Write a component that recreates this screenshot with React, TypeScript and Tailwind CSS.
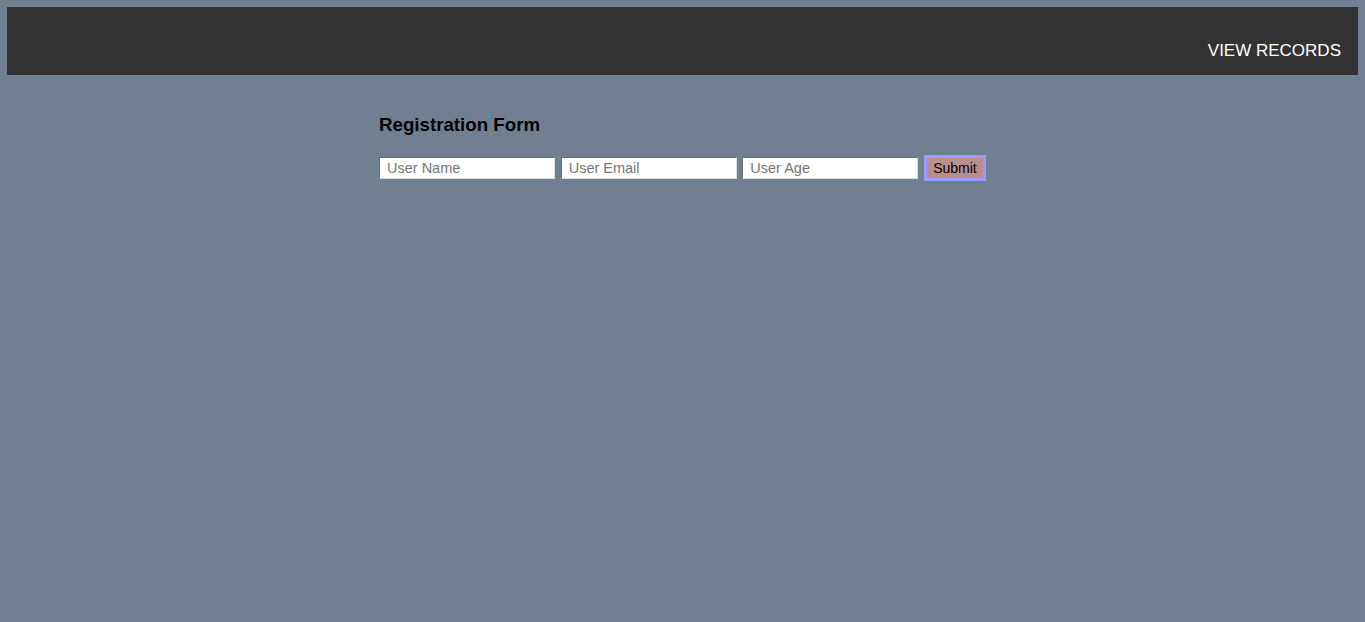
const App = () => {
  return (
    <div className="min-h-[622px] bg-[#708090] pt-[7px] font-['Liberation_Sans',Arial,sans-serif]">
      <header className="mx-[7px] flex h-[68px] items-end justify-end bg-[#333333] pl-4 pr-[17px] pb-[14px]">
        <a href="#" className="text-[17px] leading-5 text-white">
          VIEW RECORDS
        </a>
      </header>

      <div className="mx-auto mt-[38px] w-[607px]">
        <h2 className="text-[18.72px] font-bold leading-[23px] text-black">Registration Form</h2>
        <form className="mt-[19px] flex items-center gap-[5.67px]" onSubmit={(e) => e.preventDefault()}>
          <input
            type="text"
            placeholder="User Name"
            className="h-[22px] w-[176px] border border-t-[#6b6b6b] border-l-[#6b6b6b] border-r-[#dcdcdc] border-b-[#dcdcdc] bg-white px-[7px] text-[14.5px] text-black placeholder:text-[#757575] outline-none"
          />
          <input
            type="email"
            placeholder="User Email"
            className="h-[22px] w-[176px] border border-t-[#6b6b6b] border-l-[#6b6b6b] border-r-[#dcdcdc] border-b-[#dcdcdc] bg-white px-[7px] text-[14.5px] text-black placeholder:text-[#757575] outline-none"
          />
          <input
            type="number"
            placeholder="User Age"
            className="h-[22px] w-[176px] border border-t-[#6b6b6b] border-l-[#6b6b6b] border-r-[#dcdcdc] border-b-[#dcdcdc] bg-white px-[7px] text-[14.5px] text-black placeholder:text-[#757575] outline-none"
          />
          <button
            type="submit"
            className="h-[26px] w-[62px] border-[3px] border-[#9b9bff] bg-[#bc8f8f] text-[14px] leading-4 text-black"
          >
            Submit
          </button>
        </form>
      </div>
    </div>
  );
};

export default App;
